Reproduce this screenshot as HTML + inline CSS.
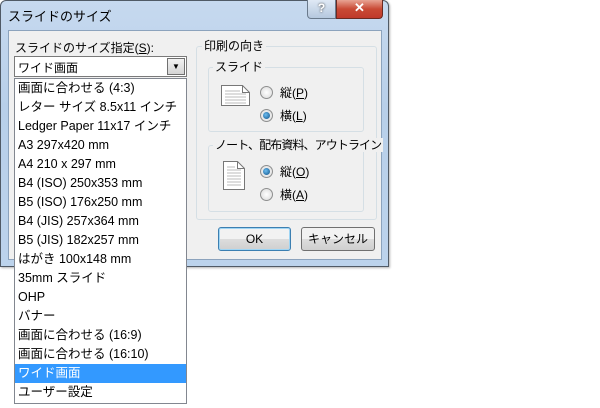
<!DOCTYPE html>
<html><head><style>
body{margin:0;width:600px;height:408px;background:#fff;position:relative;overflow:hidden;font-family:"Liberation Sans","Noto Sans CJK JP",sans-serif;font-size:12px;color:#000}
.a{position:absolute}
.win{left:0;top:0;width:387px;height:265px;background:linear-gradient(#c6d9ef,#b8cfe9 40%,#bcd3ec);border:1px solid #505a66;border-radius:6px 6px 0 0;box-shadow:1px 1px 2px rgba(0,0,0,.3)}
.client{left:8px;top:30px;width:372px;height:228px;background:#f0f0f0;border:1px solid #8ca3bd}
.grp{border:1px solid #d5dfe5;border-radius:3px}
.lg{background:#f0f0f0;padding:0 2px;line-height:14px}
.radio{width:11px;height:11px;border-radius:50%;border:1px solid #8e8f8f;background:radial-gradient(#fff,#d8d8d8)}
.radio.on::after{content:"";position:absolute;left:2px;top:2px;width:7px;height:7px;border-radius:50%;background:radial-gradient(circle at 40% 40%,#6cbdf0,#0d4f86)}
.btn{border:1px solid #707070;border-radius:3px;background:linear-gradient(#f2f2f2 50%,#dddddd 50%,#cfcfcf);text-align:center;line-height:22px}
.list{left:14px;top:78px;width:171px;height:324px;background:#fff;border:1px solid #828790}
.list div{height:19px;line-height:19px;padding-left:3px;white-space:nowrap;font-size:12.5px}
.sel{background:#3399ff;color:#fff}
</style></head><body>
<div class="a win"></div>
<div class="a" style="left:8px;top:6px;font-size:13px">スライドのサイズ</div>
<div class="a" style="left:307px;top:0;width:27px;height:18px;border:1px solid #6a7a8c;border-top:0;border-radius:0 0 0 4px;background:linear-gradient(#dfe9f5,#b5c8de);text-align:center;color:#fff;font-weight:bold;line-height:16px;text-shadow:0 0 2px #333">?</div>
<div class="a" style="left:336px;top:0;width:45px;height:18px;border:1px solid #6b2a22;border-top:0;border-radius:0 0 4px 0;background:linear-gradient(#e8a493,#c94a35 50%,#c0392b);text-align:center;color:#fff;font-weight:bold;line-height:16px;font-size:13px">✕</div>
<div class="a client"></div>
<div class="a" style="left:15px;top:39px">スライドのサイズ指定(<u>S</u>):</div>
<div class="a" style="left:14px;top:56px;width:171px;height:19px;background:#fff;border:1px solid #7a7a7a"><span style="position:absolute;left:3px;top:2px">ワイド画面</span><div class="a" style="right:1px;top:1px;width:16px;height:15px;border:1px solid #707070;background:linear-gradient(#f2f2f2,#d4d4d4);font-size:8px;text-align:center;line-height:15px">▼</div></div>
<div class="a grp" style="left:196px;top:46px;width:179px;height:172px"></div>
<div class="a lg" style="left:202px;top:39px">印刷の向き</div>
<div class="a grp" style="left:208px;top:67px;width:154px;height:63px"></div>
<div class="a lg" style="left:213px;top:60px">スライド</div>
<svg class="a" style="left:221px;top:85px" width="30" height="22"><path d="M.5 .5H21.5L28.5 7.5V20.5H.5Z" fill="#fff" stroke="#777"/><path d="M21.5 .5V7.5H28.5" fill="none" stroke="#777"/><path d="M4 6H19M4 9H25M4 12H25M4 15H25M4 18H25" stroke="#bbb"/></svg>
<div class="a radio" style="left:260px;top:86px"></div><div class="a" style="left:280px;top:84px">縦(<u>P</u>)</div>
<div class="a radio on" style="left:260px;top:109px"></div><div class="a" style="left:280px;top:107px">横(<u>L</u>)</div>
<div class="a grp" style="left:208px;top:145px;width:154px;height:65px"></div>
<div class="a lg" style="left:213px;top:138px;letter-spacing:-0.9px">ノート、配布資料、アウトライン</div>
<svg class="a" style="left:223px;top:161px" width="22" height="29"><path d="M.5 .5H14.5L21.5 7.5V28.5H.5Z" fill="#fff" stroke="#777"/><path d="M14.5 .5V7.5H21.5" fill="none" stroke="#777"/><path d="M4 6H12M4 9H18M4 12H18M4 15H18M4 18H18M4 21H18M4 24H18" stroke="#bbb"/></svg>
<div class="a radio on" style="left:260px;top:165px"></div><div class="a" style="left:280px;top:163px">縦(<u>O</u>)</div>
<div class="a radio" style="left:260px;top:188px"></div><div class="a" style="left:280px;top:186px">横(<u>A</u>)</div>
<div class="a btn" style="left:218px;top:227px;width:71px;height:22px;border-color:#3c7fb1;box-shadow:inset 0 0 0 1px #9fd5f4">OK</div>
<div class="a btn" style="left:301px;top:227px;width:72px;height:22px">キャンセル</div>
<div class="a list">
<div>画面に合わせる (4:3)</div><div>レター サイズ 8.5x11 インチ</div><div>Ledger Paper 11x17 インチ</div><div>A3 297x420 mm</div><div>A4 210 x 297 mm</div><div>B4 (ISO) 250x353 mm</div><div>B5 (ISO) 176x250 mm</div><div>B4 (JIS) 257x364 mm</div><div>B5 (JIS) 182x257 mm</div><div>はがき 100x148 mm</div><div>35mm スライド</div><div>OHP</div><div>バナー</div><div>画面に合わせる (16:9)</div><div>画面に合わせる (16:10)</div><div class="sel">ワイド画面</div><div>ユーザー設定</div>
</div>
</body></html>
